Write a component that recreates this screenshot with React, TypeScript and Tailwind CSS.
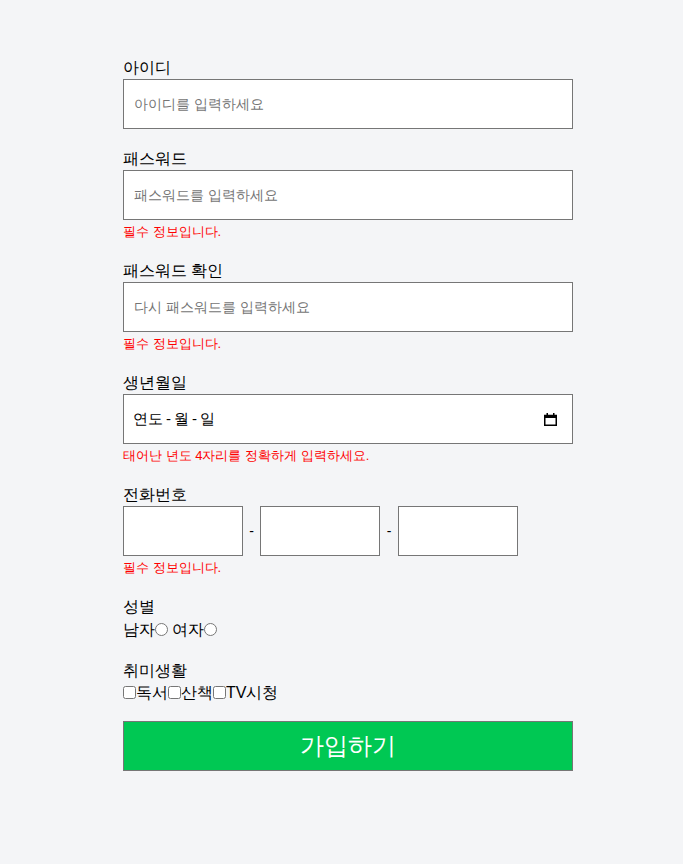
import { useState } from 'react';

function ErrorText({ children }: { children: string }) {
    return <p className="text-[13px] leading-[24px] text-[#ff0000]">{children}</p>;
}

function Label({ children }: { children: string }) {
    return <div className="text-[16px] leading-[23px] text-black">{children}</div>;
}

const inputClass =
    'block w-full h-[50px] border border-[#767676] bg-white px-[10px] text-[14px] text-black placeholder:text-[#757575] outline-none';

const phoneClass = 'h-[50px] w-[120px] border border-[#767676] bg-white outline-none';

export default function App() {
    const [gender, setGender] = useState('');

    return (
        <div
            className="min-h-[864px] bg-[#f4f5f7] pt-[56px]"
            style={{ fontFamily: '"Liberation Sans", sans-serif' }}
        >
            <form className="ml-[123px] w-[450px] flex flex-col" onSubmit={(e) => e.preventDefault()}>
                <div>
                    <Label>아이디</Label>
                    <input className={inputClass} placeholder="아이디를 입력하세요" />
                </div>

                <div className="mt-[18px]">
                    <Label>패스워드</Label>
                    <input type="password" className={inputClass} placeholder="패스워드를 입력하세요" />
                    <ErrorText>필수 정보입니다.</ErrorText>
                </div>

                <div className="mt-[15px]">
                    <Label>패스워드 확인</Label>
                    <input type="password" className={inputClass} placeholder="다시 패스워드를 입력하세요" />
                    <ErrorText>필수 정보입니다.</ErrorText>
                </div>

                <div className="mt-[15px]">
                    <Label>생년월일</Label>
                    <div className="flex h-[50px] items-center justify-between border border-[#767676] bg-white pl-[9px] pr-[15px]">
                        <span className="text-[15px] text-black">
                            연도<span className="mx-[3px]">-</span>월<span className="mx-[3px]">-</span>일
                        </span>
                        <svg width="13" height="13" viewBox="0 0 13 13" className="text-black">
                            <rect x="0.75" y="2.5" width="11.5" height="9.75" fill="none" stroke="currentColor" strokeWidth="1.5" />
                            <rect x="0" y="2" width="13" height="3" fill="currentColor" />
                            <rect x="2.5" y="0" width="1.5" height="3" fill="currentColor" />
                            <rect x="9" y="0" width="1.5" height="3" fill="currentColor" />
                        </svg>
                    </div>
                    <ErrorText>태어난 년도 4자리를 정확하게 입력하세요.</ErrorText>
                </div>

                <div className="mt-[15px]">
                    <Label>전화번호</Label>
                    <div className="flex items-center">
                        <input className={phoneClass} />
                        <span className="w-[17px] text-center text-[14px]">-</span>
                        <input className={phoneClass} />
                        <span className="w-[18px] text-center text-[14px]">-</span>
                        <input className={phoneClass} />
                    </div>
                    <ErrorText>필수 정보입니다.</ErrorText>
                </div>

                <div className="mt-[15px]">
                    <Label>성별</Label>
                    <div className="text-[16px] leading-[23px] flex items-center">
                        <label className="flex items-center">
                            남자
                            <input
                                type="radio"
                                name="gender"
                                checked={gender === 'm'}
                                onChange={() => setGender('m')}
                                className="w-[13px] h-[13px]"
                            />
                        </label>
                        <span>&nbsp;</span>
                        <label className="flex items-center">
                            여자
                            <input
                                type="radio"
                                name="gender"
                                checked={gender === 'f'}
                                onChange={() => setGender('f')}
                                className="w-[13px] h-[13px]"
                            />
                        </label>
                    </div>
                </div>

                <div className="mt-[18px]">
                    <Label>취미생활</Label>
                    <div className="text-[16px] leading-[21px] flex items-center">
                        <label className="flex items-center">
                            <input type="checkbox" className="w-[13px] h-[13px]" />
                            독서
                        </label>
                        <label className="flex items-center">
                            <input type="checkbox" className="w-[13px] h-[13px]" />
                            산책
                        </label>
                        <label className="flex items-center">
                            <input type="checkbox" className="w-[13px] h-[13px]" />
                            TV시청
                        </label>
                    </div>
                </div>

                <button
                    type="submit"
                    className="mt-[18px] h-[50px] w-full border border-[#767676] bg-[#00c853] text-[24px] text-white"
                >
                    가입하기
                </button>
            </form>
        </div>
    );
}
